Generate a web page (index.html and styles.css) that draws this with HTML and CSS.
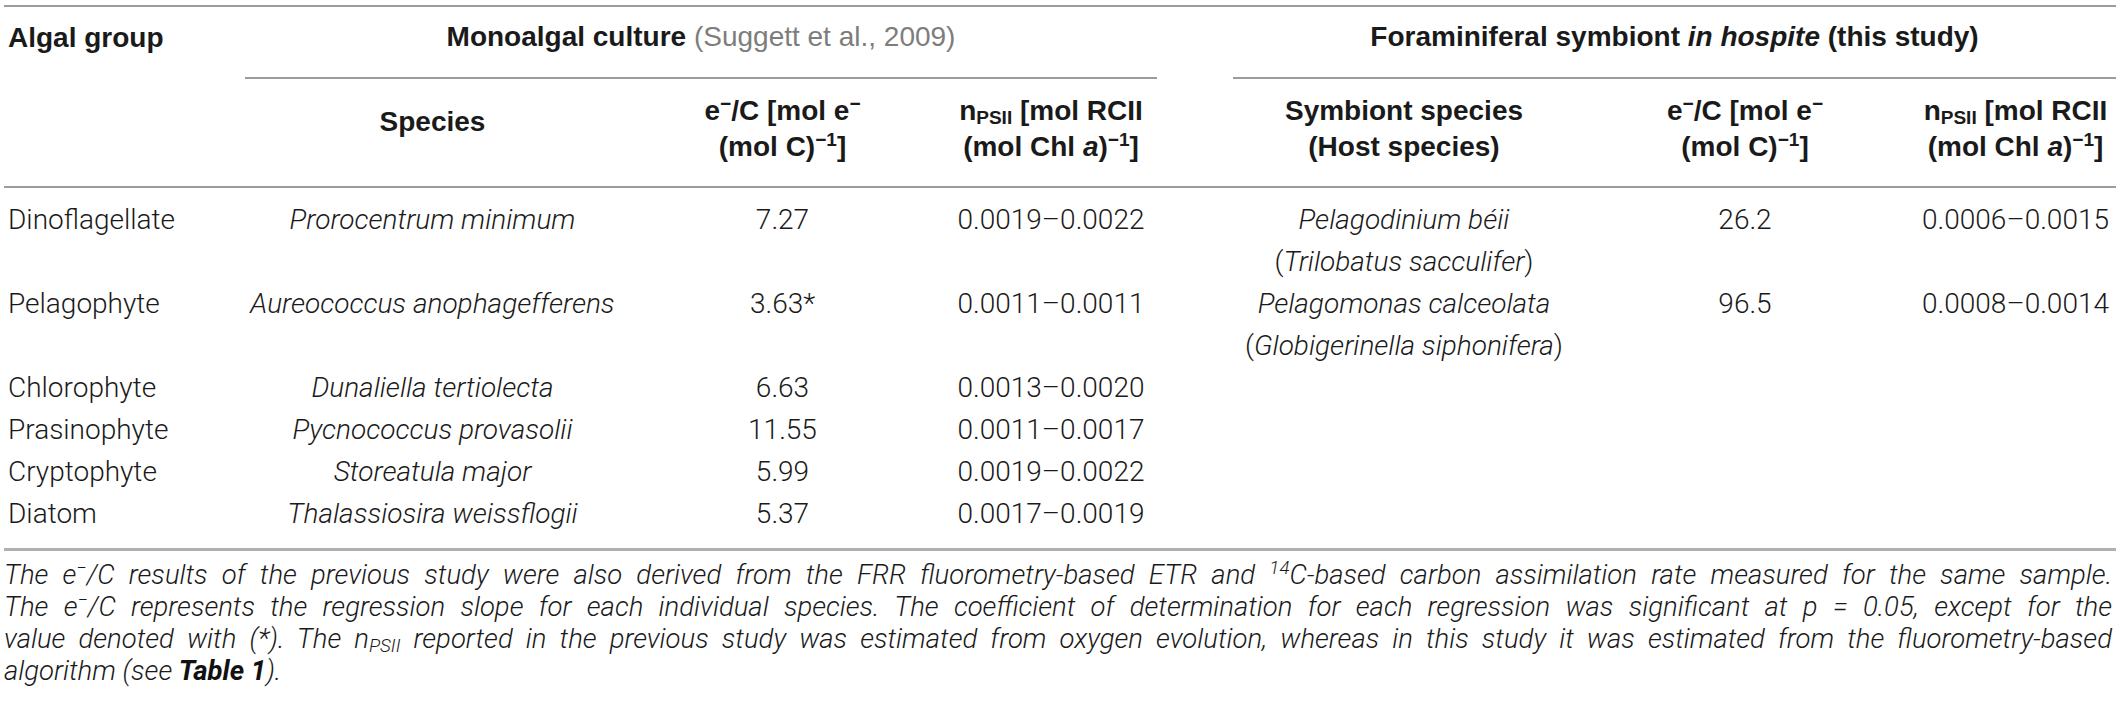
FILE: index.html
```html
<!DOCTYPE html>
<html lang="en">
<head>
    <meta charset="UTF-8">
    <meta name="viewport" content="width=device-width, initial-scale=1.0">
    <title>Table 2 - Electron requirement and PSII content</title>
    <link rel="stylesheet" href="styles.css">
</head>
<body>
    <div class="table-wrap">
        <table class="data-table">
            <colgroup>
                <col class="col-group">
                <col class="col-species">
                <col class="col-ratio">
                <col class="col-npsii">
                <col class="col-gap">
                <col class="col-host">
                <col class="col-ratio-2">
                <col class="col-npsii-2">
            </colgroup>
            <thead>
                <tr class="head-top">
                    <th class="left">Algal group</th>
                    <th colspan="3" class="span-head">Monoalgal culture <span class="cite">(Suggett et al., 2009)</span></th>
                    <th></th>
                    <th colspan="3" class="span-head">Foraminiferal symbiont <i>in hospite</i> (this study)</th>
                </tr>
                <tr class="head-sub">
                    <th></th>
                    <th class="single">Species</th>
                    <th>e<sup>&minus;</sup>/C [mol e<sup>&minus;</sup><br>(mol C)<sup>&minus;1</sup>]</th>
                    <th>n<sub>PSII</sub> [mol RCII<br>(mol Chl <i>a</i>)<sup>&minus;1</sup>]</th>
                    <th></th>
                    <th>Symbiont species<br>(Host species)</th>
                    <th>e<sup>&minus;</sup>/C [mol e<sup>&minus;</sup><br>(mol C)<sup>&minus;1</sup>]</th>
                    <th>n<sub>PSII</sub> [mol RCII<br>(mol Chl <i>a</i>)<sup>&minus;1</sup>]</th>
                </tr>
            </thead>
            <tbody>
                <tr class="first">
                    <td class="left">Dinoflagellate</td>
                    <td><i>Prorocentrum minimum</i></td>
                    <td>7.27</td>
                    <td>0.0019&ndash;0.0022</td>
                    <td></td>
                    <td><i>Pelagodinium béii</i><br>(<i>Trilobatus sacculifer</i>)</td>
                    <td>26.2</td>
                    <td>0.0006&ndash;0.0015</td>
                </tr>
                <tr>
                    <td class="left">Pelagophyte</td>
                    <td><i>Aureococcus anophagefferens</i></td>
                    <td>3.63*</td>
                    <td>0.0011&ndash;0.0011</td>
                    <td></td>
                    <td><i>Pelagomonas calceolata</i><br>(<i>Globigerinella siphonifera</i>)</td>
                    <td>96.5</td>
                    <td>0.0008&ndash;0.0014</td>
                </tr>
                <tr>
                    <td class="left">Chlorophyte</td>
                    <td><i>Dunaliella tertiolecta</i></td>
                    <td>6.63</td>
                    <td>0.0013&ndash;0.0020</td>
                    <td></td>
                    <td></td>
                    <td></td>
                    <td></td>
                </tr>
                <tr>
                    <td class="left">Prasinophyte</td>
                    <td><i>Pycnococcus provasolii</i></td>
                    <td>11.55</td>
                    <td>0.0011&ndash;0.0017</td>
                    <td></td>
                    <td></td>
                    <td></td>
                    <td></td>
                </tr>
                <tr>
                    <td class="left">Cryptophyte</td>
                    <td><i>Storeatula major</i></td>
                    <td>5.99</td>
                    <td>0.0019&ndash;0.0022</td>
                    <td></td>
                    <td></td>
                    <td></td>
                    <td></td>
                </tr>
                <tr class="last">
                    <td class="left">Diatom</td>
                    <td><i>Thalassiosira weissflogii</i></td>
                    <td>5.37</td>
                    <td>0.0017&ndash;0.0019</td>
                    <td></td>
                    <td></td>
                    <td></td>
                    <td></td>
                </tr>
            </tbody>
        </table>

        <div class="caption">
            <span class="cap-line">The e<sup>&minus;</sup>/C results of the previous study were also derived from the FRR fluorometry-based ETR and <sup>14</sup>C-based carbon assimilation rate measured for the same sample.</span>
            <span class="cap-line">The e<sup>&minus;</sup>/C represents the regression slope for each individual species. The coefficient of determination for each regression was significant at <i>p</i> = 0.05, except for the</span>
            <span class="cap-line">value denoted with (*). The n<sub>PSII</sub> reported in the previous study was estimated from oxygen evolution, whereas in this study it was estimated from the fluorometry-based</span>
            <span class="cap-line end">algorithm (see <b>Table 1</b>).</span>
        </div>
    </div>
</body>
</html>
```

FILE: styles.css
```css
body {
    margin: 0;
    padding: 0;
    background: #ffffff;
    color: #262626;
    font-family: Roboto, 'Liberation Sans', sans-serif;
    font-weight: 300;
}
.table-wrap {
    padding: 5px 2px 0 4px;
}
.data-table {
    width: 2112px;
    table-layout: fixed;
    border-collapse: collapse;
    font-size: 28px;
}
.col-group { width: 241px; }
.col-species { width: 375px; }
.col-ratio { width: 325px; }
.col-npsii { width: 212px; }
.col-gap { width: 76px; }
.col-host { width: 342px; }
.col-ratio-2 { width: 340px; }
.col-npsii-2 { width: 201px; }

thead {
    border-top: 2px solid #9c9c9c;
    border-bottom: 2px solid #9c9c9c;
}
th {
    font-family: 'Liberation Sans', Arial, sans-serif;
    font-size: 28px;
    font-weight: bold;
    color: #1a1a1a;
    line-height: 36px;
    text-align: center;
    white-space: nowrap;
    padding: 0;
}
.head-top th {
    padding: 12px 0 22px;
}
.head-top .span-head {
    border-bottom: 2px solid #9c9c9c;
}
.cite {
    font-weight: normal;
    color: #7d7d7d;
}
.head-sub th {
    padding: 14px 0 21px;
    vertical-align: top;
}
.head-sub .single {
    vertical-align: middle;
    padding-bottom: 36px;
}
th.left, td.left {
    text-align: left;
    padding-left: 4px;
}
sup, sub {
    font-size: 0.68em;
    line-height: 0;
}
sup {
    vertical-align: 0.55em;
}
sub {
    vertical-align: -0.2em;
}

tbody {
    border-bottom: 3px solid #b0b0b0;
}
td {
    text-align: center;
    vertical-align: top;
    line-height: 42px;
    padding: 0;
    color: #1a1a1a;
    white-space: nowrap;
}
tr.first td {
    padding-top: 11px;
}
tr.last td {
    padding-bottom: 13px;
}

.caption {
    width: 2108px;
    margin-top: 8px;
    font-size: 27.5px;
    font-style: italic;
    line-height: 32px;
    color: #1a1a1a;
}
.cap-line {
    display: block;
    text-align: justify;
    text-align-last: justify;
}
.cap-line.end {
    text-align-last: left;
}
.caption b {
    font-weight: bold;
    color: #111111;
}
```
